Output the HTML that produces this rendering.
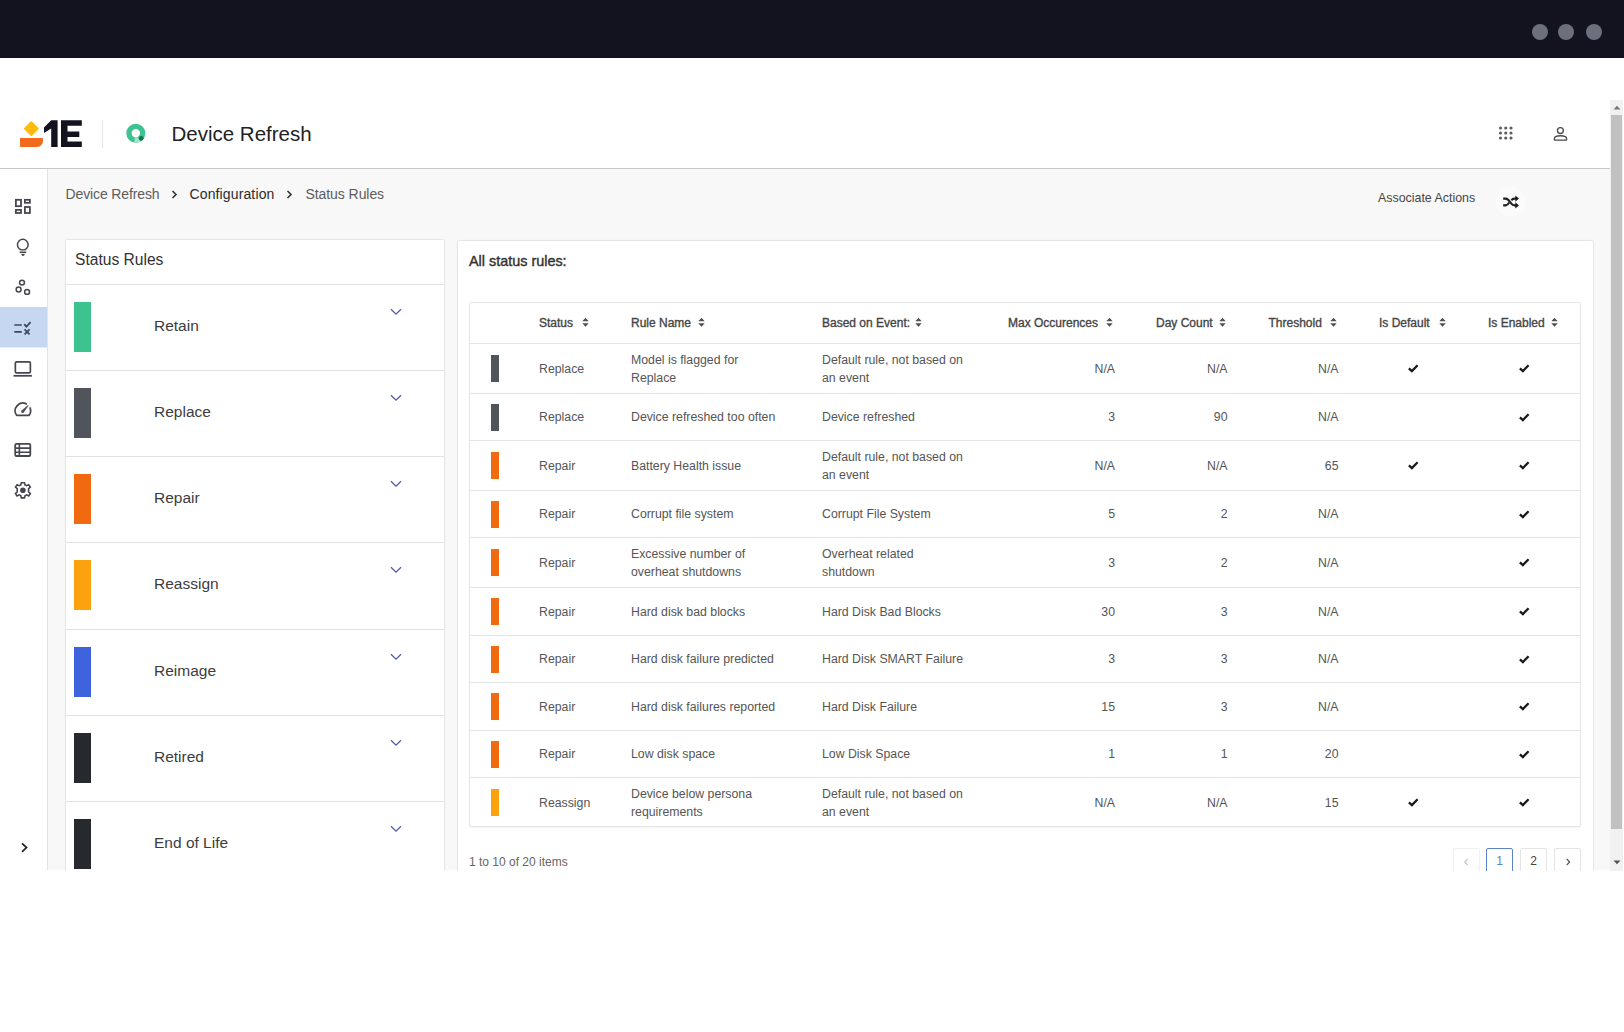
<!DOCTYPE html>
<html><head><meta charset="utf-8">
<style>
*{box-sizing:border-box;margin:0;padding:0}
html,body{width:1624px;height:1032px;overflow:hidden;background:#fff;font-family:"Liberation Sans",sans-serif;color:#333}
div,svg{position:absolute}
#app{left:0;top:0;width:1624px;height:871px;overflow:hidden;background:#fff}
#topbar{left:0;top:0;width:1624px;height:58px;background:#13131f}
.dot{width:16px;height:16px;border-radius:50%;background:#6b707c;top:24px}
#content{left:0;top:169px;width:1610px;height:701px;background:#f8f8f8}
#hdrline{left:0;top:168px;width:1610px;height:1px;background:#c6c6c6}
#side{left:0;top:169px;width:48px;height:701px;background:#fff;border-right:1px solid #e3e3e3}
.bc{top:186px;font-size:14px;color:#5c5c5c;white-space:nowrap;line-height:16px}
.card{background:#fff;box-shadow:0 0 0 1px rgba(0,0,0,.045),0 0 3px rgba(0,0,0,.08);border-radius:1px}
.item{left:66px;width:378px;height:86px;border-top:1px solid #e2e2e2;background:#fff}
.ibar{left:8px;top:17px;width:17px;height:50px}
.ilbl{left:88px;top:32px;font-size:15.5px;color:#3d3d3d;white-space:nowrap;line-height:18px}
.ichev{left:324px;top:22.5px;width:12px;height:8px}
.row{left:470px;width:1110px;border-top:1px solid #e4e4e4}
.bar{left:21px;top:50%;margin-top:-13.5px;width:8px;height:27px}
.td{top:50%;transform:translateY(-50%);font-size:12.3px;color:#555;white-space:nowrap;line-height:18px}
.tr{text-align:right}
.cc{top:50%;margin-top:-4.5px;width:11px;height:9px}
.ck{left:0;top:0}
.th{top:316px;font-size:12px;color:#454545;white-space:nowrap;line-height:14px;-webkit-text-stroke:0.35px #454545}
.sic{top:316.6px;width:7px;height:11px}
.so{left:0;top:0}
#scroll{left:1610px;top:100px;width:13px;height:771px;background:#f1f1f1}
.pg{top:848px;width:27px;height:30px;border:1px solid #e4e4e4;border-radius:2px;background:#fff;font-size:12px;color:#444;text-align:center;line-height:24px}
</style></head><body>
<div id="app">
<div id="topbar">
  <div class="dot" style="left:1532px"></div>
  <div class="dot" style="left:1558px"></div>
  <div class="dot" style="left:1586px"></div>
</div>

<!-- header -->
<div style="left:25.7px;top:122.7px;width:10.6px;height:10.6px;background:#fdbb12;transform:rotate(45deg);border-radius:1px"></div>
<div style="left:20px;top:138.3px;width:22.6px;height:8.8px;background:#f26b1d;border-radius:0 1px 6px 1px"></div>
<svg style="left:40px;top:118px" width="46" height="32" viewBox="40 118 46 32" fill="#13131f">
  <path d="M51.2 120.2 H57.6 V147.1 H51.2 V128.6 L44 133 V127.6 Z"/>
  <path d="M61 120.2 H81.8 V125.8 H67.5 V131.6 H79.3 V137.1 H67.5 V141.4 H81.8 V147.1 H61 Z"/>
</svg>
<div style="left:102px;top:120px;width:1px;height:28px;background:#e6e6e6"></div>
<svg style="left:124px;top:121px" width="24" height="24" viewBox="124 121 24 24">
  <circle cx="135.8" cy="133.3" r="6.85" fill="none" stroke="#3ec28f" stroke-width="5.3"/>
  <path d="M139.2 139.2 A6.85 6.85 0 0 1 134.6 140.1" fill="none" stroke="#a6e3c9" stroke-width="5.3"/>
  <circle cx="141.2" cy="138.3" r="2.4" fill="#0d7a4c"/>
</svg>
<div style="left:171.5px;top:122px;font-size:20.5px;color:#222;white-space:nowrap;line-height:24px">Device Refresh</div>
<svg style="left:1497px;top:125px" width="18" height="18" viewBox="0 0 18 18" fill="#5e5e5e">
  <circle cx="3.5" cy="3" r="1.6"/><circle cx="8.75" cy="3" r="1.6"/><circle cx="14" cy="3" r="1.6"/>
  <circle cx="3.5" cy="8" r="1.6"/><circle cx="8.75" cy="8" r="1.6"/><circle cx="14" cy="8" r="1.6"/>
  <circle cx="3.5" cy="13" r="1.6"/><circle cx="8.75" cy="13" r="1.6"/><circle cx="14" cy="13" r="1.6"/>
</svg>
<svg style="left:1552px;top:126px" width="17" height="16" viewBox="0 0 17 16" fill="none" stroke="#4a4a4a" stroke-width="1.35" stroke-linejoin="round">
  <circle cx="8.4" cy="4.5" r="2.95"/>
  <path d="M2.4 14.1 V12.7 C2.4 10.5 5 9.7 8.4 9.7 C11.8 9.7 14.6 10.5 14.6 12.7 V14.1 Z"/>
</svg>

<div id="hdrline"></div>
<div id="content"></div>
<div id="side"></div>

<!-- sidebar icons -->
<svg style="left:0;top:0" width="48" height="870" viewBox="0 0 48 870">
  <rect x="0" y="307" width="47" height="40.5" fill="#c6d7f2"/>
  <g fill="none" stroke="#44444e" stroke-width="1.75">
    <rect x="15.9" y="199.8" width="5.1" height="6.4"/>
    <rect x="24.9" y="199.8" width="5" height="3"/>
    <rect x="15.9" y="209.9" width="5.1" height="3.1"/>
    <rect x="24.9" y="207" width="5" height="6"/>
  </g>
  <g fill="none" stroke="#464650" stroke-width="1.5">
    <circle cx="22.8" cy="244.7" r="5.35"/>
    <circle cx="22" cy="282.6" r="2.45"/>
    <circle cx="18.6" cy="289.5" r="2.45"/>
    <circle cx="27.1" cy="291.9" r="2.45"/>
    <rect x="15.35" y="361.85" width="15" height="11.1" rx="1.3" stroke-width="1.7"/>
    <path d="M13.5 375.8 H31.9" stroke-width="1.75"/>
    <path d="M30.04 407.92 A7.7 7.7 0 0 1 29.15 415.3 L16.65 415.3 A7.7 7.7 0 0 1 26.28 403.88" stroke-linecap="round" stroke-linejoin="round" stroke-width="1.7"/>
    <rect x="15.2" y="443.9" width="15.1" height="12.1" rx="1.3" stroke-width="1.8"/>
    <path d="M15.2 448.1 H30.3 M15.2 452.2 H30.3 M19.35 443.9 V456" stroke-width="1.6"/>
  </g>
  <rect x="19.7" y="250.2" width="6.5" height="1.5" fill="#a8a8a8"/><rect x="19.7" y="251.8" width="6.5" height="1.3" fill="#444"/>
  <path d="M21.2 254 H24.9 C24.6 255.3 23.8 256 23 256 C22.2 256 21.4 255.3 21.2 254 Z" fill="#4a4a4a"/>
  <path d="M23.69 412.52 L28.69 405.57 L28.11 405.03 L21.51 410.48 Z" fill="#50505a"/><circle cx="22.6" cy="411.5" r="1.5" fill="#50505a"/>
  <g stroke="#3b4862" stroke-width="1.8" fill="none">
    <path d="M14.3 325 H21.8 M14.3 331.8 H21.8" stroke-width="1.7"/>
    <path d="M24.2 324.2 L26.4 326.6 L30.6 322.2"/>
    <path d="M24.6 329.4 L29.6 334.4 M29.6 329.4 L24.6 334.4"/>
  </g>
  <g transform="translate(22.9 490.3)">
    <path fill="none" stroke="#464650" stroke-width="1.6" d="M-1.6 -7.6 H1.6 L2.1 -5.4 L3.7 -4.6 L5.8 -5.6 L7.4 -3.2 L5.7 -1.6 V1.6 L7.4 3.2 L5.8 5.6 L3.7 4.6 L2.1 5.4 L1.6 7.6 H-1.6 L-2.1 5.4 L-3.7 4.6 L-5.8 5.6 L-7.4 3.2 L-5.7 1.6 V-1.6 L-7.4 -3.2 L-5.8 -5.6 L-3.7 -4.6 L-2.1 -5.4 Z"/>
    <circle r="2.8" fill="#464650"/>
  </g>
  <path d="M22 843.3 L26.5 847.6 L22 851.9" fill="none" stroke="#222" stroke-width="1.75"/>
</svg>

<!-- breadcrumb -->
<div class="bc" style="left:65.5px;letter-spacing:-0.12px">Device Refresh</div>
<svg style="left:171px;top:190px" width="7" height="9" viewBox="0 0 7 9"><path d="M1.5 1 L5 4.5 L1.5 8" fill="none" stroke="#333" stroke-width="1.6"/></svg>
<div class="bc" style="left:189.5px;color:#2b2b2b;letter-spacing:0.13px">Configuration</div>
<svg style="left:286px;top:190px" width="7" height="9" viewBox="0 0 7 9"><path d="M1.5 1 L5 4.5 L1.5 8" fill="none" stroke="#333" stroke-width="1.6"/></svg>
<div class="bc" style="left:305.5px;letter-spacing:-0.07px">Status Rules</div>
<div class="bc" style="left:1378px;top:191px;font-size:12.4px;line-height:14px;color:#444">Associate Actions</div>
<div style="left:1496px;top:187px;width:29px;height:29px;border-radius:50%;background:#fbfbfb"></div>
<svg style="left:1502px;top:194.5px" width="18" height="14" viewBox="0 0 18 14" fill="none" stroke="#1e1e1e" stroke-width="2.1">
  <path d="M1.2 3.6 H3.8 C7.6 3.6 8.6 10.4 12.4 10.4 H14"/>
  <path d="M1.2 10.4 H3.8 C5.6 10.4 6.4 9 7.2 7.6"/>
  <path d="M9.4 5.4 C10.2 4.2 11 3.6 12.4 3.6 H14"/>
  <path d="M13.3 0.4 L17 3.6 L13.3 6.8 Z M13.3 7.2 L17 10.4 L13.3 13.6 Z" fill="#1e1e1e" stroke="none"/>
</svg>

<!-- left card -->
<div class="card" style="left:66px;top:240px;width:378px;height:680px"></div>
<div style="left:75px;top:251px;font-size:15.6px;color:#333;white-space:nowrap;line-height:18px">Status Rules</div>
<div class="item" style="top:284px"><div class="ibar" style="background:#3ec28f"></div><div class="ilbl">Retain</div><div class="ichev"><svg width="12" height="8" viewBox="0 0 12 8"><path d="M1 1.2 L6 6.2 L11 1.2" fill="none" stroke="#5457ad" stroke-width="1.3"/></svg></div></div><div class="item" style="top:370px"><div class="ibar" style="background:#50555b"></div><div class="ilbl">Replace</div><div class="ichev"><svg width="12" height="8" viewBox="0 0 12 8"><path d="M1 1.2 L6 6.2 L11 1.2" fill="none" stroke="#5457ad" stroke-width="1.3"/></svg></div></div><div class="item" style="top:456px"><div class="ibar" style="background:#f26a10"></div><div class="ilbl">Repair</div><div class="ichev"><svg width="12" height="8" viewBox="0 0 12 8"><path d="M1 1.2 L6 6.2 L11 1.2" fill="none" stroke="#5457ad" stroke-width="1.3"/></svg></div></div><div class="item" style="top:542px"><div class="ibar" style="background:#fca20f"></div><div class="ilbl">Reassign</div><div class="ichev"><svg width="12" height="8" viewBox="0 0 12 8"><path d="M1 1.2 L6 6.2 L11 1.2" fill="none" stroke="#5457ad" stroke-width="1.3"/></svg></div></div><div class="item" style="top:629px"><div class="ibar" style="background:#3e63dd"></div><div class="ilbl">Reimage</div><div class="ichev"><svg width="12" height="8" viewBox="0 0 12 8"><path d="M1 1.2 L6 6.2 L11 1.2" fill="none" stroke="#5457ad" stroke-width="1.3"/></svg></div></div><div class="item" style="top:715px"><div class="ibar" style="background:#26292e"></div><div class="ilbl">Retired</div><div class="ichev"><svg width="12" height="8" viewBox="0 0 12 8"><path d="M1 1.2 L6 6.2 L11 1.2" fill="none" stroke="#5457ad" stroke-width="1.3"/></svg></div></div><div class="item" style="top:801px"><div class="ibar" style="background:#26292e"></div><div class="ilbl">End of Life</div><div class="ichev"><svg width="12" height="8" viewBox="0 0 12 8"><path d="M1 1.2 L6 6.2 L11 1.2" fill="none" stroke="#5457ad" stroke-width="1.3"/></svg></div></div>

<!-- main card -->
<div class="card" style="left:457.5px;top:241px;width:1135.5px;height:680px"></div>
<div style="left:469px;top:253px;font-size:14.4px;color:#333;white-space:nowrap;line-height:16px;-webkit-text-stroke:0.4px #333">All status rules:</div>
<div style="left:469px;top:302px;width:1112px;height:525px;border:1px solid #e6e6e6;border-radius:2px;box-shadow:0 1px 2px rgba(0,0,0,.05)"></div>
<div class="th" style="left:539px">Status</div><div class="sic" style="left:581.5px"><svg class="so" width="7" height="11" viewBox="0 0 7 11"><path d="M3.5 0.8 L6.7 4.3 L0.3 4.3 Z M0.3 6.3 L6.7 6.3 L3.5 9.8 Z" fill="#505050"/></svg></div><div class="th" style="left:631px">Rule Name</div><div class="sic" style="left:697.5px"><svg class="so" width="7" height="11" viewBox="0 0 7 11"><path d="M3.5 0.8 L6.7 4.3 L0.3 4.3 Z M0.3 6.3 L6.7 6.3 L3.5 9.8 Z" fill="#505050"/></svg></div><div class="th" style="left:822px">Based on Event:</div><div class="sic" style="left:915.0px"><svg class="so" width="7" height="11" viewBox="0 0 7 11"><path d="M3.5 0.8 L6.7 4.3 L0.3 4.3 Z M0.3 6.3 L6.7 6.3 L3.5 9.8 Z" fill="#505050"/></svg></div><div class="th" style="left:1008px">Max Occurences</div><div class="sic" style="left:1106.0px"><svg class="so" width="7" height="11" viewBox="0 0 7 11"><path d="M3.5 0.8 L6.7 4.3 L0.3 4.3 Z M0.3 6.3 L6.7 6.3 L3.5 9.8 Z" fill="#505050"/></svg></div><div class="th" style="left:1156px">Day Count</div><div class="sic" style="left:1218.5px"><svg class="so" width="7" height="11" viewBox="0 0 7 11"><path d="M3.5 0.8 L6.7 4.3 L0.3 4.3 Z M0.3 6.3 L6.7 6.3 L3.5 9.8 Z" fill="#505050"/></svg></div><div class="th" style="left:1268.5px">Threshold</div><div class="sic" style="left:1329.5px"><svg class="so" width="7" height="11" viewBox="0 0 7 11"><path d="M3.5 0.8 L6.7 4.3 L0.3 4.3 Z M0.3 6.3 L6.7 6.3 L3.5 9.8 Z" fill="#505050"/></svg></div><div class="th" style="left:1379px">Is Default</div><div class="sic" style="left:1438.5px"><svg class="so" width="7" height="11" viewBox="0 0 7 11"><path d="M3.5 0.8 L6.7 4.3 L0.3 4.3 Z M0.3 6.3 L6.7 6.3 L3.5 9.8 Z" fill="#505050"/></svg></div><div class="th" style="left:1488px">Is Enabled</div><div class="sic" style="left:1551.0px"><svg class="so" width="7" height="11" viewBox="0 0 7 11"><path d="M3.5 0.8 L6.7 4.3 L0.3 4.3 Z M0.3 6.3 L6.7 6.3 L3.5 9.8 Z" fill="#505050"/></svg></div>
<div class="row" style="top:343px;height:50px"><div class="bar" style="background:#50555b"></div><div class="td" style="left:69px">Replace</div><div class="td" style="left:161px">Model is flagged for<br>Replace</div><div class="td" style="left:352px">Default rule, not based on<br>an event</div><div class="td tr" style="right:465px">N/A</div><div class="td tr" style="right:352.5px">N/A</div><div class="td tr" style="right:241.5px">N/A</div><div class="cc" style="left:938px"><svg class="ck" width="11" height="9" viewBox="0 0 11 9"><path d="M0.9 4.3 L3.9 7.1 L9.6 1.2" fill="none" stroke="#1a1a1a" stroke-width="2.3"/></svg></div><div class="cc" style="left:1048.5px"><svg class="ck" width="11" height="9" viewBox="0 0 11 9"><path d="M0.9 4.3 L3.9 7.1 L9.6 1.2" fill="none" stroke="#1a1a1a" stroke-width="2.3"/></svg></div></div>
<div class="row" style="top:393px;height:47px"><div class="bar" style="background:#50555b"></div><div class="td" style="left:69px">Replace</div><div class="td" style="left:161px">Device refreshed too often</div><div class="td" style="left:352px">Device refreshed</div><div class="td tr" style="right:465px">3</div><div class="td tr" style="right:352.5px">90</div><div class="td tr" style="right:241.5px">N/A</div><div class="cc" style="left:1048.5px"><svg class="ck" width="11" height="9" viewBox="0 0 11 9"><path d="M0.9 4.3 L3.9 7.1 L9.6 1.2" fill="none" stroke="#1a1a1a" stroke-width="2.3"/></svg></div></div>
<div class="row" style="top:440px;height:50px"><div class="bar" style="background:#f26a10"></div><div class="td" style="left:69px">Repair</div><div class="td" style="left:161px">Battery Health issue</div><div class="td" style="left:352px">Default rule, not based on<br>an event</div><div class="td tr" style="right:465px">N/A</div><div class="td tr" style="right:352.5px">N/A</div><div class="td tr" style="right:241.5px">65</div><div class="cc" style="left:938px"><svg class="ck" width="11" height="9" viewBox="0 0 11 9"><path d="M0.9 4.3 L3.9 7.1 L9.6 1.2" fill="none" stroke="#1a1a1a" stroke-width="2.3"/></svg></div><div class="cc" style="left:1048.5px"><svg class="ck" width="11" height="9" viewBox="0 0 11 9"><path d="M0.9 4.3 L3.9 7.1 L9.6 1.2" fill="none" stroke="#1a1a1a" stroke-width="2.3"/></svg></div></div>
<div class="row" style="top:490px;height:47px"><div class="bar" style="background:#f26a10"></div><div class="td" style="left:69px">Repair</div><div class="td" style="left:161px">Corrupt file system</div><div class="td" style="left:352px">Corrupt File System</div><div class="td tr" style="right:465px">5</div><div class="td tr" style="right:352.5px">2</div><div class="td tr" style="right:241.5px">N/A</div><div class="cc" style="left:1048.5px"><svg class="ck" width="11" height="9" viewBox="0 0 11 9"><path d="M0.9 4.3 L3.9 7.1 L9.6 1.2" fill="none" stroke="#1a1a1a" stroke-width="2.3"/></svg></div></div>
<div class="row" style="top:537px;height:50px"><div class="bar" style="background:#f26a10"></div><div class="td" style="left:69px">Repair</div><div class="td" style="left:161px">Excessive number of<br>overheat shutdowns</div><div class="td" style="left:352px">Overheat related<br>shutdown</div><div class="td tr" style="right:465px">3</div><div class="td tr" style="right:352.5px">2</div><div class="td tr" style="right:241.5px">N/A</div><div class="cc" style="left:1048.5px"><svg class="ck" width="11" height="9" viewBox="0 0 11 9"><path d="M0.9 4.3 L3.9 7.1 L9.6 1.2" fill="none" stroke="#1a1a1a" stroke-width="2.3"/></svg></div></div>
<div class="row" style="top:587px;height:48px"><div class="bar" style="background:#f26a10"></div><div class="td" style="left:69px">Repair</div><div class="td" style="left:161px">Hard disk bad blocks</div><div class="td" style="left:352px">Hard Disk Bad Blocks</div><div class="td tr" style="right:465px">30</div><div class="td tr" style="right:352.5px">3</div><div class="td tr" style="right:241.5px">N/A</div><div class="cc" style="left:1048.5px"><svg class="ck" width="11" height="9" viewBox="0 0 11 9"><path d="M0.9 4.3 L3.9 7.1 L9.6 1.2" fill="none" stroke="#1a1a1a" stroke-width="2.3"/></svg></div></div>
<div class="row" style="top:635px;height:47px"><div class="bar" style="background:#f26a10"></div><div class="td" style="left:69px">Repair</div><div class="td" style="left:161px">Hard disk failure predicted</div><div class="td" style="left:352px">Hard Disk SMART Failure</div><div class="td tr" style="right:465px">3</div><div class="td tr" style="right:352.5px">3</div><div class="td tr" style="right:241.5px">N/A</div><div class="cc" style="left:1048.5px"><svg class="ck" width="11" height="9" viewBox="0 0 11 9"><path d="M0.9 4.3 L3.9 7.1 L9.6 1.2" fill="none" stroke="#1a1a1a" stroke-width="2.3"/></svg></div></div>
<div class="row" style="top:682px;height:48px"><div class="bar" style="background:#f26a10"></div><div class="td" style="left:69px">Repair</div><div class="td" style="left:161px">Hard disk failures reported</div><div class="td" style="left:352px">Hard Disk Failure</div><div class="td tr" style="right:465px">15</div><div class="td tr" style="right:352.5px">3</div><div class="td tr" style="right:241.5px">N/A</div><div class="cc" style="left:1048.5px"><svg class="ck" width="11" height="9" viewBox="0 0 11 9"><path d="M0.9 4.3 L3.9 7.1 L9.6 1.2" fill="none" stroke="#1a1a1a" stroke-width="2.3"/></svg></div></div>
<div class="row" style="top:730px;height:47px"><div class="bar" style="background:#f26a10"></div><div class="td" style="left:69px">Repair</div><div class="td" style="left:161px">Low disk space</div><div class="td" style="left:352px">Low Disk Space</div><div class="td tr" style="right:465px">1</div><div class="td tr" style="right:352.5px">1</div><div class="td tr" style="right:241.5px">20</div><div class="cc" style="left:1048.5px"><svg class="ck" width="11" height="9" viewBox="0 0 11 9"><path d="M0.9 4.3 L3.9 7.1 L9.6 1.2" fill="none" stroke="#1a1a1a" stroke-width="2.3"/></svg></div></div>
<div class="row" style="top:777px;height:50px"><div class="bar" style="background:#fca20f"></div><div class="td" style="left:69px">Reassign</div><div class="td" style="left:161px">Device below persona<br>requirements</div><div class="td" style="left:352px">Default rule, not based on<br>an event</div><div class="td tr" style="right:465px">N/A</div><div class="td tr" style="right:352.5px">N/A</div><div class="td tr" style="right:241.5px">15</div><div class="cc" style="left:938px"><svg class="ck" width="11" height="9" viewBox="0 0 11 9"><path d="M0.9 4.3 L3.9 7.1 L9.6 1.2" fill="none" stroke="#1a1a1a" stroke-width="2.3"/></svg></div><div class="cc" style="left:1048.5px"><svg class="ck" width="11" height="9" viewBox="0 0 11 9"><path d="M0.9 4.3 L3.9 7.1 L9.6 1.2" fill="none" stroke="#1a1a1a" stroke-width="2.3"/></svg></div></div>
<div style="left:469px;top:855px;font-size:12px;color:#666;white-space:nowrap;line-height:14px">1 to 10 of 20 items</div>
<div class="pg" style="left:1453px;border-color:#f0f0f0"><svg style="left:9px;top:8px" width="7" height="10" viewBox="0 0 7 10"><path d="M4.6 2 L1.8 5 L4.6 8" fill="none" stroke="#c4c4c4" stroke-width="1.2"/></svg></div>
<div class="pg" style="left:1486px;border-color:#5a82c8;color:#5a82c8">1</div>
<div class="pg" style="left:1520px">2</div>
<div class="pg" style="left:1554px"><svg style="left:10px;top:8px" width="7" height="10" viewBox="0 0 7 10"><path d="M1.8 2 L4.6 5 L1.8 8" fill="none" stroke="#555" stroke-width="1.2"/></svg></div>

<div id="scroll">
  <svg style="left:3px;top:5px" width="8" height="5" viewBox="0 0 8 5"><path d="M0.5 4.5 L4 0.8 L7.5 4.5 Z" fill="#777"/></svg>
  <div style="left:1px;top:15px;width:11px;height:714px;background:#c1c1c1"></div>
  <svg style="left:3px;top:760px" width="8" height="5" viewBox="0 0 8 5"><path d="M0.5 0.5 L4 4.2 L7.5 0.5 Z" fill="#555"/></svg>
</div>
</div>
</body></html>
